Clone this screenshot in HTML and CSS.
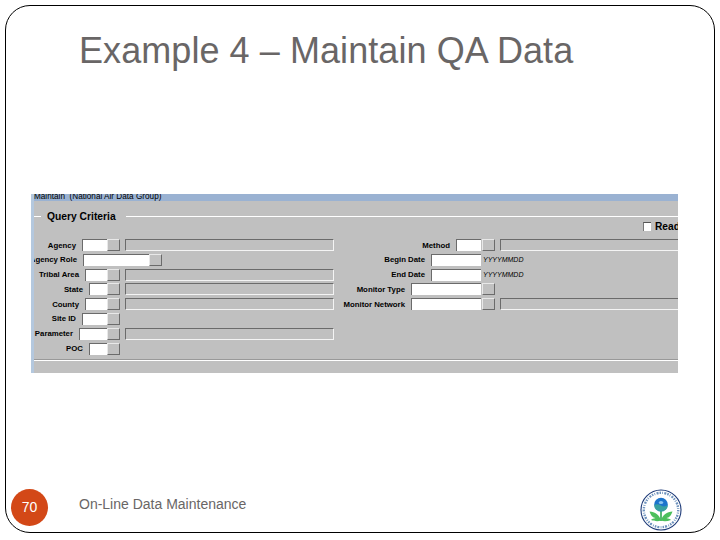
FILE: index.html
```
<!DOCTYPE html>
<html lang="en">
<head>
  <meta charset="UTF-8">
  <title>Example 4 – Maintain QA Data</title>
  <link rel="stylesheet" href="styles.css">
</head>
<body>
  <div class="slide">
    <h1>Example 4 – Maintain QA Data</h1>

    <!-- Query form -->
    <div class="window">
      <div class="titlebar"><span>Maintain&nbsp; (National Air Data Group)</span></div>
      <div class="legend">Query Criteria</div>
      <div class="read-only"><span class="checkbox"></span>Read</div>

      <div class="criteria">
        <div class="column left">
          <div class="row"><div class="field"><label>Agency</label><span class="input w25"></span></div><span class="lov"></span><span class="display"></span></div>
          <div class="row"><div class="field wide"><label>Agency Role</label><span class="input w66"></span></div><span class="lov"></span></div>
          <div class="row"><div class="field"><label>Tribal Area</label><span class="input w22"></span></div><span class="lov"></span><span class="display"></span></div>
          <div class="row"><div class="field"><label>State</label><span class="input w18"></span></div><span class="lov"></span><span class="display"></span></div>
          <div class="row"><div class="field"><label>County</label><span class="input w22"></span></div><span class="lov"></span><span class="display"></span></div>
          <div class="row"><div class="field"><label>Site ID</label><span class="input w25"></span></div><span class="lov"></span></div>
          <div class="row"><div class="field"><label>Parameter</label><span class="input w28"></span></div><span class="lov"></span><span class="display"></span></div>
          <div class="row"><div class="field"><label>POC</label><span class="input w18"></span></div><span class="lov"></span></div>
        </div>
        <div class="column right">
          <div class="row"><div class="field"><label>Method</label><span class="input w25"></span></div><span class="lov"></span><span class="display"></span></div>
          <div class="row"><div class="field"><label>Begin Date</label><span class="input w50"></span></div><span class="hint">YYYYMMDD</span></div>
          <div class="row"><div class="field"><label>End Date</label><span class="input w50"></span></div><span class="hint">YYYYMMDD</span></div>
          <div class="row"><div class="field"><label>Monitor Type</label><span class="input w70"></span></div><span class="lov"></span></div>
          <div class="row"><div class="field"><label>Monitor Network</label><span class="input w70"></span></div><span class="lov"></span><span class="display"></span></div>
        </div>
      </div>
      <div class="rule"></div>
    </div>

    <!-- Footer -->
    <div class="footer">
      <span class="page">70</span>
      <span class="footer-text">On-Line Data Maintenance</span>
      <svg class="seal" viewBox="0 0 42 42">
        <circle cx="21" cy="21" r="20" fill="#fff" stroke="#1d3a78" stroke-width="1.1"/>
        <circle cx="21" cy="21" r="17.2" fill="none" stroke="#6f93bd" stroke-width="2.4" stroke-dasharray="1.5 1.2 .8 1.4 2 1"/>
        <path d="M20.200 21h1.600v11h-1.600z" fill="#2fa84f"/>
        <path d="M21 31.500C19.500 25.500 15 23 9.500 22.500C11 27 13 28.500 15.500 29C13.500 29.500 12 30 11 31C15 32.500 18.500 32.500 21 31.500C23.500 32.500 27 32.500 31 31C30 30 28.500 29.500 26.500 29C29 28.500 31 27 32.500 22.500C27 23 22.500 25.500 21 31.500Z" fill="#4cc05c"/>
        <circle cx="21" cy="15.500" r="6.800" fill="#1c74cc"/>
        <path d="M14.200 16q3.400-1.500 6.800.5t6.800-.5a6.800 6.800 0 0 1-13.600 0z" fill="#38a0a0"/>
        <ellipse cx="21" cy="13.500" rx="2.200" ry="1.600" fill="#8cc4f0"/>
      </svg>
    </div>
  </div>
</body>
</html>
```
FILE: styles.css
```
* {
    box-sizing: border-box;
}

body {
    margin: 0;
    width: 720px;
    height: 540px;
    padding: 5px;
    background: #fff;
    font-family: "Liberation Sans", Arial, sans-serif;
    overflow: hidden;
}

.slide {
    width: 710px;
    height: 528px;
    border: 1px solid #000;
    border-radius: 25px;
    display: flex;
    flex-direction: column;
}

h1 {
    margin: 24px 0 0 73px;
    height: 42px;
    line-height: 42px;
    font-size: 36px;
    font-weight: normal;
    letter-spacing: 0.07px;
    color: #696666;
    white-space: nowrap;
}

.window {
    width: 647px;
    height: 179px;
    margin: 122px 0 0 25px;
    background: #c0c0c0;
    border-left: 3px solid #b4c8de;
    overflow: hidden;
    font-weight: bold;
    color: #000;
    flex: none;
}

.titlebar {
    height: 7px;
    background: #9ab2d2;
    font-size: 8.2px;
    font-weight: normal;
    line-height: 7px;
    overflow: hidden;
    white-space: nowrap;
}

.titlebar span {
    display: block;
    margin-top: -1px;
}

.legend {
    display: flex;
    align-items: center;
    height: 30px;
    font-size: 10.3px;
    gap: 6px;
    white-space: nowrap;
}

.legend::before,
.legend::after {
    content: "";
    height: 1px;
    background: #fff;
    width: 7px;
}

.legend::after {
    flex: 1;
    margin-left: 4px;
}

.read-only {
    display: flex;
    align-items: center;
    gap: 4px;
    height: 10px;
    margin: -10px 0 0 609px;
    font-size: 10.2px;
    white-space: nowrap;
}

.checkbox {
    width: 8px;
    height: 9px;
    background: #fff;
    border-top: 1px solid #555;
    border-left: 1px solid #777;
    flex: none;
}

.criteria {
    display: flex;
    height: 119px;
    margin-top: 8px;
    font-size: 7.8px;
}

.column {
    display: grid;
    grid-template-rows: repeat(8, 12px);
    row-gap: 2.8px;
}

.left {
    width: 300px;
}

.right {
    width: 344px;
}

.row {
    display: flex;
    align-items: center;
    white-space: nowrap;
}

.field {
    display: flex;
    justify-content: flex-end;
    align-items: center;
    gap: 6px;
    width: 73px;
    height: 12px;
    flex: none;
}

.wide {
    width: 115px;
}

.right .field {
    width: 147px;
    margin-right: 1px;
}

.input {
    height: 12px;
    background: #fff;
    border-top: 1px solid #6b6b6b;
    border-left: 1px solid #6b6b6b;
    flex: none;
}

.w18 { width: 18px; }
.w22 { width: 22px; }
.w25 { width: 25px; }
.w28 { width: 28px; }
.w50 { width: 50px; }
.w66 { width: 66px; }
.w70 { width: 70px; }

.lov {
    width: 13px;
    height: 12px;
    border: 1px solid #e8e8e8;
    border-right-color: #6b6b6b;
    border-bottom-color: #6b6b6b;
    flex: none;
}

.display {
    flex: 1;
    height: 12px;
    margin-left: 5px;
    border: 1px solid #f4f4f4;
    border-top-color: #6b6b6b;
    border-left-color: #6b6b6b;
}

.right .display {
    border-right: none;
}

.hint {
    margin-left: 1px;
    font-size: 7px;
    font-style: italic;
    font-weight: normal;
}

.rule {
    height: 2px;
    margin-top: 1px;
    background: #fff;
    border-top: 1px solid #999;
}

.footer {
    display: flex;
    align-items: center;
    height: 42px;
    margin: 116px 0 0 5px;
}

.page {
    width: 37px;
    height: 37px;
    margin-top: -6px;
    border-radius: 50%;
    background: #d34817;
    color: #fff;
    font-size: 14px;
    line-height: 37px;
    text-align: center;
}

.footer-text {
    margin: -12px 0 0 31px;
    font-size: 14px;
    color: #696666;
}

.seal {
    width: 42px;
    height: 42px;
    margin-left: auto;
    margin-right: 32px;
}
```
